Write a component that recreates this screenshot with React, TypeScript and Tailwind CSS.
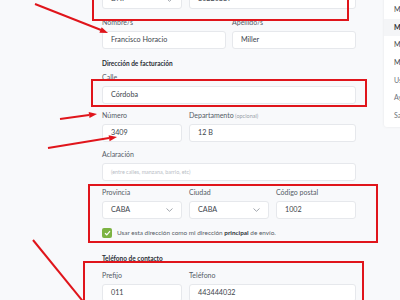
const labelCls = "block h-[9px] leading-[9px] text-[7px] text-[#555b66]"
const inputCls =
  "flex items-center h-[18px] rounded-[3px] border border-[#e6e8ec] bg-white px-2 text-[7.2px] text-[#40454d]"

function Chevron() {
  return (
    <svg width="7" height="4" viewBox="0 0 7 4" className="ml-auto">
      <path d="M0.5 0.5 L3.5 3.3 L6.5 0.5" fill="none" stroke="#8a9099" strokeWidth="0.8" />
    </svg>
  )
}

function Field({ label, value, select, extra, className = "" }: { label?: string; value: string; select?: boolean; extra?: string; className?: string }) {
  return (
    <div className={className}>
      {label && (
        <span className={labelCls}>
          {label}
          {extra && <span className="text-[5.5px] text-[#9aa0a8]"> {extra}</span>}
        </span>
      )}
      <div className={(label ? "mt-[4px] " : "") + inputCls}>
        <span>{value}</span>
        {select && <Chevron />}
      </div>
    </div>
  )
}

const menu = ["Mis datos", "Mis compras", "Mis direcciones", "Mis favoritos", "Usuario", "Ayuda", "Salir"]

export default function App() {
  return (
    <div className="relative w-[400px] h-[300px] overflow-hidden bg-[#f8f9fb] font-['Lato',sans-serif]">
      <div className="flex">
        {/* form */}
        <div className="ml-[102px] w-[254px] mt-[-10px] flex flex-col">
          <div className="flex gap-[7px]">
            <div className={inputCls + " w-[80px] h-[19px]"}>
              <span>DNI</span>
              <Chevron />
            </div>
            <div className={inputCls + " flex-1 h-[19px]"}>30220339</div>
          </div>

          <div className="mt-[9px] grid grid-cols-2 gap-[6px]">
            <Field label="Nombre/s" value="Francisco Horacio" />
            <Field label="Apellido/s" value="Miller" />
          </div>

          <h3 className="mt-[10px] h-[9px] leading-[9px] text-[6.5px] font-bold text-[#2b2f36]">Dirección de facturación</h3>

          <Field className="mt-[5px]" label="Calle" value="Córdoba" />

          <div className="mt-[7px] flex gap-[7px]">
            <Field className="w-[80px]" label="Número" value="3409" />
            <Field className="flex-1" label="Departamento" extra="(opcional)" value="12 B" />
          </div>

          <div className="mt-[8px]">
            <span className={labelCls}>Aclaración</span>
            <div className={"mt-[4px] " + inputCls}>
              <span className="text-[5.4px] text-[#b9bec6]">(entre calles, manzana, barrio, etc)</span>
            </div>
          </div>

          <div className="mt-[7px] flex gap-[7px]">
            <Field className="w-[80px]" label="Provincia" value="CABA" select />
            <Field className="w-[80px]" label="Ciudad" value="CABA" select />
            <Field className="w-[80px]" label="Código postal" value="1002" />
          </div>

          <div className="mt-[9px] flex items-center gap-[5px]">
            <span className="flex h-[10px] w-[10px] items-center justify-center rounded-[2px] bg-[#7cb342]">
              <svg width="7" height="6" viewBox="0 0 7 6">
                <path d="M1 3.2 L2.8 4.8 L6 1.2" fill="none" stroke="#fff" strokeWidth="1.2" />
              </svg>
            </span>
            <span className="text-[6.4px] text-[#555b66]">
              Usar esta dirección como mi dirección <b className="text-[#2b2f36]">principal</b> de envío.
            </span>
          </div>

          <h3 className="mt-[16px] h-[9px] leading-[9px] text-[6.5px] font-bold text-[#2b2f36]">Teléfono de contacto</h3>

          <div className="mt-[8px] flex gap-[7px]">
            <Field className="w-[80px]" label="Prefijo" value="011" />
            <Field className="flex-1" label="Teléfono" value="443444032" />
          </div>
        </div>

        {/* account menu */}
        <div className="ml-[28px] mt-[-6px] w-[120px] h-[133px] shrink-0 rounded-[3px] bg-white shadow-[0_0_3px_rgba(0,0,0,0.08)] pt-[7px]">
          {menu.map((m, i) => (
            <div
              key={m}
              className={
                "h-[17.7px] leading-[17.7px] pl-[10px] text-[7px] " +
                (i === 1 ? "bg-[#f4f5f7] font-bold text-[#2b2f36]" : i < 4 ? "text-[#3a3f47]" : "text-[#6b717a]")
              }
            >
              {m}
            </div>
          ))}
        </div>
      </div>

      {/* annotations */}
      <svg className="pointer-events-none absolute inset-0" width="400" height="300" viewBox="0 0 400 300">
        <g fill="none" stroke="#e0151b" strokeWidth="2">
          <rect x="93" y="-10" width="255" height="30" />
          <rect x="92" y="80" width="274" height="26" />
          <rect x="89" y="185" width="288" height="57" />
          <rect x="84" y="262" width="279" height="60" />
          <line x1="35" y1="4" x2="101" y2="30" />
          <line x1="60" y1="119" x2="89" y2="115" />
          <line x1="48" y1="148" x2="109" y2="138" />
          <line x1="33" y1="240" x2="90" y2="310" />
        </g>
        <g fill="#e0151b">
          <polygon points="108,33 99.4,32.8 101.7,27.3" />
          <polygon points="97,114 89.5,118 88.7,112.1" />
          <polygon points="117,137 109.6,141.2 108.6,135.3" />
        </g>
      </svg>
    </div>
  )
}
